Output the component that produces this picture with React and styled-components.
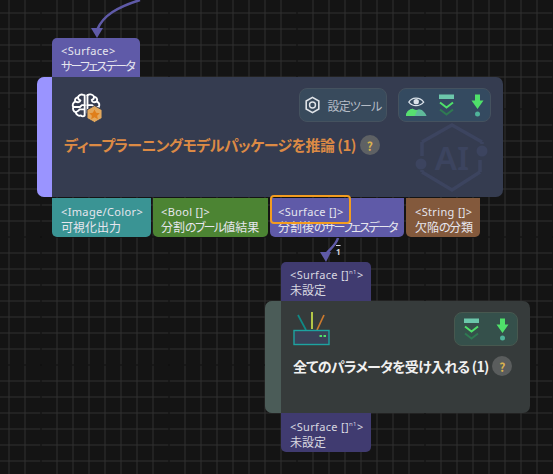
import React from "react";
import styled, { createGlobalStyle } from "styled-components";

const Global = createGlobalStyle`
  html, body { margin: 0; padding: 0; background: #141414; }
  body { width: 553px; height: 474px; overflow: hidden; }
`;

const FONT = `"Noto Sans CJK JP", "Noto Sans", sans-serif`;

const Canvas = styled.div`
  position: relative;
  width: 553px;
  height: 474px;
  overflow: hidden;
  font-family: ${FONT};
  font-feature-settings: "palt";
  background-color: #141414;
  background-image:
    linear-gradient(to right, #070707 0 1.4px, transparent 1.4px),
    linear-gradient(to bottom, #070707 0 1.4px, transparent 1.4px),
    linear-gradient(to right, #303030 0 1.4px, transparent 1.4px),
    linear-gradient(to bottom, #303030 0 1.4px, transparent 1.4px);
  background-size: 128px 128px, 128px 128px, 16px 16px, 16px 16px;
  background-position: 40.5px 0, 0 108.5px, 8.5px 0, 0 12.5px;
`;

const NodeGroup = styled.div`
  position: absolute;
  left: ${(p) => p.$x}px;
  top: ${(p) => p.$y}px;
  display: flex;
  flex-direction: column;
  align-items: flex-start;
`;

const Port = styled.div`
  box-sizing: border-box;
  width: ${(p) => p.$w}px;
  height: 39px;
  padding: ${(p) => p.$padTop ?? 6}px 0 0 ${(p) => p.$pad ?? 9}px;
  background: ${(p) => p.$bg};
  color: ${(p) => p.$fg ?? "#e6e6ee"};
  font-size: 12px;
  line-height: 15px;
  white-space: nowrap;
  overflow: hidden;
  border-radius: ${(p) => (p.$top ? "5px 5px 0 0" : "0 0 5px 5px")};
  margin-left: ${(p) => p.$indent ?? 0}px;
`;

const PortType = styled.div`
  font-family: "Noto Sans", sans-serif;
  font-size: 11px;
  letter-spacing: 0.35px;
  sup { font-size: 6px; line-height: 0; vertical-align: 5px; }
`;

const Kana = styled.span`
  letter-spacing: -1.7px;
`;

const PortRow = styled.div`
  display: flex;
  gap: 2px;
  margin: 1px 0 0 15px;
`;

const Card = styled.div`
  box-sizing: border-box;
  display: flex;
  width: ${(p) => p.$w}px;
  height: ${(p) => p.$h}px;
  background: ${(p) => p.$bg};
  border-radius: 7px;
  overflow: hidden;
  position: relative;
`;

const Stripe = styled.div`
  flex: 0 0 ${(p) => p.$w}px;
  background: ${(p) => p.$c};
`;

const CardBody = styled.div`
  flex: 1;
  min-width: 0;
  display: flex;
  flex-direction: column;
  padding: ${(p) => p.$pad};
  position: relative;
`;

const TopLine = styled.div`
  display: flex;
  align-items: flex-start;
  justify-content: space-between;
`;

const IconSlot = styled.div`
  display: flex;
  margin: ${(p) => p.$m};
`;

const Tools = styled.div`
  display: flex;
  gap: 11px;
`;

const Pill = styled.div`
  box-sizing: border-box;
  display: flex;
  align-items: center;
  justify-content: center;
  gap: ${(p) => p.$gap ?? 0}px;
  height: 34px;
  width: ${(p) => p.$w}px;
  background: ${(p) => p.$bg};
  border: 1px solid ${(p) => p.$line};
  border-radius: 8px;
  color: #b5bcc6;
  font-size: 12px;
`;

const PillLabel = styled.span`
  letter-spacing: -0.8px;
`;

const PillGroup = styled.div`
  display: flex;
  align-items: center;
  gap: 16px;
`;

const TitleLine = styled.div`
  display: flex;
  align-items: center;
  gap: ${(p) => p.$gap}px;
  margin-top: ${(p) => p.$mt}px;
  white-space: nowrap;
`;

const Title = styled.span`
  color: ${(p) => p.$c};
  font-size: ${(p) => p.$size}px;
  font-weight: 700;
  line-height: 20px;
  letter-spacing: ${(p) => p.$ls}px;
`;

const Help = styled.span`
  flex: 0 0 20px;
  display: flex;
  align-items: center;
  justify-content: center;
  width: 20px;
  height: 20px;
  border-radius: 50%;
  background: ${(p) => p.$bg};
  color: #d9b24f;
  font-size: 12px;
  font-weight: 700;
`;

const Highlight = styled.div`
  position: absolute;
  left: 270px;
  top: 195px;
  width: 81px;
  height: 29px;
  box-sizing: border-box;
  border: 2.5px solid #f39c1f;
  border-radius: 4px;
`;

const Overlay = styled.svg`
  position: absolute;
  left: 0;
  top: 0;
  pointer-events: none;
`;

const MarkSlot = styled.div`
  position: absolute;
  right: 15px;
  top: 45px;
  display: flex;
`;

const Badge = styled.span`
  position: absolute;
  left: 336px;
  top: 247px;
  color: #d8d8e0;
  font-size: 8px;
  line-height: 10px;
  font-family: "Noto Sans", sans-serif;
  font-weight: 700;
  text-decoration: overline;
`;

const BrainIcon = () => (
  <svg width="34" height="31" viewBox="0 0 36 33">
    <g fill="none" stroke="#fff" strokeWidth="2" strokeLinejoin="round" strokeLinecap="round">
      <path d="M14 3c-2-1-5 0-5.500 2.500C6 6 4.500 8 5.500 10 3 11.500 2 14 3.500 16 2.500 18 3.500 21 6 21.500 6.500 24 9 26 11.500 25c1 1 3 1 4 0V3.500C15.200 3.200 14.500 3 14 3z" />
      <path d="M18.500 3.500C20 2 24 2 25.500 5c2.500.5 4 2.500 3 5 2.500 1.500 3 4 2 6" />
      <path d="M18.500 3.500V22" />
      <path d="M5.500 10c2 1 4 1 5 0M8.500 5.500c0 2 1 3 2.500 3.500M3.500 16h7l2-2h3M6 21.500c1.500-1 3-1 4-3h5" />
      <path d="M28.500 10c-2 1-4 1-5 0M25.500 5c0 2-1 3-2.500 3.500M18.500 14h5l2 2h4" />
    </g>
    <path d="M26 14.500l8 4.500v9l-8 4.500-8-4.500v-9z" fill="#e3a85c" stroke="#353c50" strokeWidth="1" />
    <path d="M26 18.500l1.800 3.600 3.800.5-2.800 2.600.8 3.800-3.600-2-3.600 2 .8-3.800-2.800-2.600 3.800-.5z" fill="#e07f1a" />
  </svg>
);

const HexNutIcon = () => (
  <svg width="17" height="18" viewBox="0 0 18 20">
    <path d="M9 1.500l7 4v9l-7 4-7-4v-9z" fill="none" stroke="#dfe3e8" strokeWidth="1.800" />
    <circle cx="9" cy="10" r="3.300" fill="none" stroke="#dfe3e8" strokeWidth="1.600" />
  </svg>
);

const EyeIcon = () => (
  <svg width="23" height="23" viewBox="0 0 24 24">
    <path d="M4 8.500C7 3.500 15 2.500 19.500 8.500 15 13.500 8 13.500 4 8.500z" fill="none" stroke="#dbe3ea" strokeWidth="1.300" />
    <circle cx="11.700" cy="8" r="2.800" fill="#dbe3ea" />
    <path d="M1 23c0-4 3.500-7 7-7.500 1.500 1.500 5 1.500 6.500.5 3 0 6.500 3 8 7z" fill="#5fb99a" />
    <path d="M1 23c0-4 3.500-7 7-7.500 1.500 1.500 3 1.500 5 1.200L10 23z" fill="#57e06f" />
  </svg>
);

const SkipIcon = () => (
  <svg width="17" height="23" viewBox="0 0 17 23">
    <rect x="1" y="0.500" width="15" height="4.500" fill="#6cc7ab" />
    <path d="M2 8.500l6.500 5 6.500-5" fill="none" stroke="#4fe06a" strokeWidth="2" />
    <path d="M2 15.500l6.500 5 6.500-5" fill="none" stroke="#2f7a52" strokeWidth="2" />
  </svg>
);

const DownIcon = () => (
  <svg width="13" height="23" viewBox="0 0 13 23">
    <path d="M4 .5h5v6h3.500L6.500 15 .5 6.500H4z" fill="#4fe06a" />
    <circle cx="6.500" cy="20" r="2.500" fill="#4fb39a" />
  </svg>
);

const RouterIcon = () => (
  <svg width="38" height="34" viewBox="0 0 38 34">
    <path d="M5 3l8 15" stroke="#0f8a86" strokeWidth="1.700" />
    <path d="M19 0v17" stroke="#c9e04a" strokeWidth="1.700" />
    <path d="M31 3l-7 15" stroke="#cc7a2e" strokeWidth="1.700" />
    <rect x="1" y="18.500" width="35" height="14" fill="#3a4258" stroke="#1da3a0" strokeWidth="1.400" />
    <rect x="26.500" y="23" width="2.500" height="2" fill="#4fe06a" />
    <rect x="30.500" y="23" width="2.500" height="2" fill="#4fe06a" />
  </svg>
);

const AiMark = () => (
  <svg width="73" height="71" viewBox="0 0 73 71" fill="none" stroke="#3c445f" strokeWidth="3.500">
    <path d="M7 20L37 3l30 17M7 50l30 18 28-18" />
    <path d="M7 20v14M67 20v2M7 50v-2M65 50V38" />
    <circle cx="6" cy="42" r="5.500" fill="#3c445f" stroke="none" />
    <circle cx="67" cy="29" r="5.500" fill="#3c445f" stroke="none" />
    <text x="37" y="48" textAnchor="middle" fontFamily="Noto Sans, sans-serif" fontWeight="600" fontSize="33" fill="#3c445f" stroke="none">AI</text>
  </svg>
);

export default function App() {
  return (
    <Canvas>
      <Global />
      <NodeGroup $x={37} $y={38}>
        <Port $w={88} $bg="#5f5aa8" $top $indent={15} $padTop={5}>
          <PortType>&lt;Surface&gt;</PortType>
          <div><Kana>サーフェスデータ</Kana></div>
        </Port>
        <Card $w={466} $h={120} $bg="#353c50">
          <Stripe $w={15} $c="#9a94ff" />
          <CardBody $pad="11px 12px 0 12px">
            <MarkSlot>
              <AiMark />
            </MarkSlot>
            <TopLine>
              <IconSlot $m="4px 0 0 6px">
                <BrainIcon />
              </IconSlot>
              <Tools>
                <Pill $w={88} $gap={6} $bg="#384a5c" $line="#45525f">
                  <HexNutIcon />
                  <PillLabel>設定ツール</PillLabel>
                </Pill>
                <Pill $w={93} $gap={10} $bg="#344a60" $line="#45525f">
                  <EyeIcon />
                  <PillGroup>
                    <SkipIcon />
                    <DownIcon />
                  </PillGroup>
                </Pill>
              </Tools>
            </TopLine>
            <TitleLine $mt={12} $gap={4}>
              <Title $c="#dc8a45" $size={15} $ls={-0.55}>ディープラーニングモデルパッケージを推論 (1)</Title>
              <Help $bg="#5e6164">?</Help>
            </TitleLine>
          </CardBody>
        </Card>
        <PortRow>
          <Port $w={99} $bg="#3a9494">
            <PortType>&lt;Image/Color&gt;</PortType>
            <div>可視化出力</div>
          </Port>
          <Port $w={115} $bg="#4c8433" $pad={8}>
            <PortType>&lt;Bool []&gt;</PortType>
            <div>分割<Kana>のブール</Kana>値結果</div>
          </Port>
          <Port $w={134} $bg="#5f5aa8" $pad={8}>
            <PortType>&lt;Surface []&gt;</PortType>
            <div>分割後<Kana>のサーフェスデータ</Kana></div>
          </Port>
          <Port $w={74} $bg="#83593c">
            <PortType>&lt;String []&gt;</PortType>
            <div>欠陥<Kana>の</Kana>分類</div>
          </Port>
        </PortRow>
      </NodeGroup>

      <NodeGroup $x={265} $y={262}>
        <Port $w={90} $bg="#403b70" $fg="#d8d8e0" $top $indent={16} $padTop={5}>
          <PortType>&lt;Surface []<sup>n1</sup>&gt;</PortType>
          <div>未設定</div>
        </Port>
        <Card $w={265} $h={112} $bg="#363b3b">
          <Stripe $w={16} $c="#4b5c58" />
          <CardBody $pad="11px 12px 0 12px">
            <TopLine>
              <RouterIcon />
              <Pill $w={64} $gap={16} $bg="#35504b" $line="#47584f">
                <SkipIcon />
                <DownIcon />
              </Pill>
            </TopLine>
            <TitleLine $mt={10} $gap={4}>
              <Title $c="#f0f0f0" $size={14} $ls={-0.75}>全てのパラメータを受け入れる (1)</Title>
              <Help $bg="#5a5d5d">?</Help>
            </TitleLine>
          </CardBody>
        </Card>
        <Port $w={90} $bg="#403b70" $fg="#d8d8e0" $indent={16}>
          <PortType>&lt;Surface []<sup>n1</sup>&gt;</PortType>
          <div>未設定</div>
        </Port>
      </NodeGroup>

      <Highlight />
      <Badge>1</Badge>
      <Overlay width="553" height="474" viewBox="0 0 553 474">
        <path d="M140 0C118 7 103 15 97 30" fill="none" stroke="#5f5aa8" strokeWidth="2.500" />
        <path d="M91 28h12l-6 10z" fill="#5f5aa8" />
        <path d="M338 238C336 245 330 249 326 254" fill="none" stroke="#5f5aa8" strokeWidth="2.500" />
        <path d="M320 252h11l-5 10z" fill="#5f5aa8" />
      </Overlay>
    </Canvas>
  );
}
